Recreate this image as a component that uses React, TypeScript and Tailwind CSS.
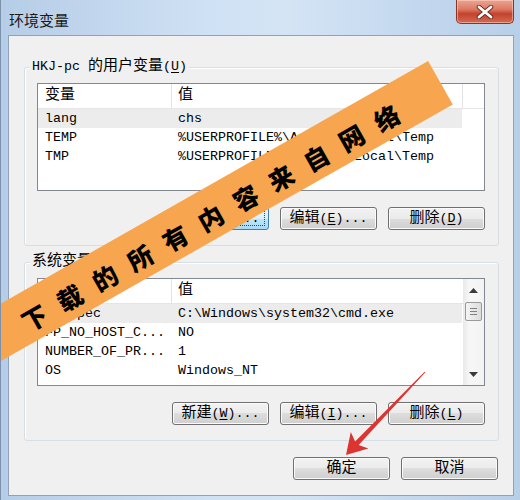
import type { ReactNode } from "react";

type Row = [string, string];

const userVars: Row[] = [
  ["lang", "chs"],
  ["TEMP", "%USERPROFILE%\\AppData\\Local\\Temp"],
  ["TMP", "%USERPROFILE%\\AppData\\Local\\Temp"],
];

const systemVars: Row[] = [
  ["ComSpec", "C:\\Windows\\system32\\cmd.exe"],
  ["FP_NO_HOST_C...", "NO"],
  ["NUMBER_OF_PR...", "1"],
  ["OS", "Windows_NT"],
];

// CJK runs are set a bit larger than the mono latin, like SimSun's full/half width
function Cn({ children }: { children: ReactNode }) {
  return <span className="text-[15px]">{children}</span>;
}

function Key({ children }: { children: ReactNode }) {
  return <span className="underline underline-offset-2">{children}</span>;
}

function Button({ children, focused = false }: { children: ReactNode; focused?: boolean }) {
  if (focused) {
    return (
      <div className="relative flex h-[23px] w-[97px] items-center justify-center rounded-[3px] border border-[#3c7fb1] bg-[linear-gradient(#eaf6fd_0%,#d9f0fc_50%,#bee6fd_50%,#a7d9f5_100%)] leading-[20px]">
        <span className="absolute inset-[3px] border border-dotted border-[#444]" />
        {children}
      </div>
    );
  }
  return (
    <div className="flex h-[23px] w-[97px] items-center justify-center rounded-[3px] border border-[#707070] bg-[linear-gradient(#f2f2f2_0%,#ebebeb_50%,#dddddd_50%,#cfcfcf_100%)] leading-[20px] shadow-[inset_0_0_0_1px_#fbfbfb]">
      {children}
    </div>
  );
}

function Header({ filler }: { filler: boolean }) {
  return (
    <div className="flex h-[25px] shrink-0 border-b border-[#e5e5e5] bg-white">
      <div className="flex w-[134px] shrink-0 items-center border-r border-[#e3e3e3] pl-[7px]">
        <Cn>变量</Cn>
      </div>
      {filler ? (
        <>
          <div className="flex w-[291px] shrink-0 items-center border-r border-[#e3e3e3] pl-[6px]">
            <Cn>值</Cn>
          </div>
          <div className="flex-1" />
        </>
      ) : (
        <div className="flex flex-1 items-center pl-[6px]">
          <Cn>值</Cn>
        </div>
      )}
    </div>
  );
}

function Rows({ rows }: { rows: Row[] }) {
  return (
    <>
      {rows.map(([name, value], i) => (
        <div
          key={name}
          className={
            i === 0
              ? "flex h-[19px] w-[424px] shrink-0 items-center bg-[#ececec]"
              : "flex h-[19px] w-[424px] shrink-0 items-center"
          }
        >
          <div className="w-[134px] shrink-0 whitespace-nowrap pl-[7px]">{name}</div>
          <div className="whitespace-nowrap pl-[6px]">{value}</div>
        </div>
      ))}
    </>
  );
}

function ScrollBar() {
  return (
    <div className="flex w-[21px] shrink-0 flex-col bg-[linear-gradient(90deg,#e8e8e8,#f7f7f7_30%,#f3f3f3)]">
      <div className="flex h-[22px] items-center justify-center">
        <svg width="9" height="5" viewBox="0 0 9 5">
          <path d="M0 5 L4.5 0 L9 5Z" fill="#3a3a3a" />
        </svg>
      </div>
      <div className="mx-[2px] mt-[1px] flex h-[19px] flex-col items-center justify-center gap-[2px] rounded-[2px] border border-[#9a9a9a] bg-[linear-gradient(90deg,#f4f4f4,#e8e8e8_50%,#dcdcdc)]">
        <span className="h-px w-[7px] bg-[#808080]" />
        <span className="h-px w-[7px] bg-[#808080]" />
        <span className="h-px w-[7px] bg-[#808080]" />
      </div>
      <div className="flex-1" />
      <div className="flex h-[22px] items-center justify-center">
        <svg width="9" height="5" viewBox="0 0 9 5">
          <path d="M0 0 L4.5 5 L9 0Z" fill="#3a3a3a" />
        </svg>
      </div>
    </div>
  );
}

function GroupBox({ label, children }: { label: ReactNode; children: ReactNode }) {
  return (
    <div className="relative ml-[15px] mr-[14px] rounded-[3px] border border-[#d5dfe5] pb-[15px] pl-[12px] pr-[13px] pt-[15px] shadow-[inset_1px_1px_0_#ffffff]">
      <span className="absolute -top-[11px] left-[5px] whitespace-nowrap bg-[#f0f0f0] px-[2px] leading-[20px]">
        {label}
      </span>
      {children}
    </div>
  );
}

export default function App() {
  return (
    <div className="relative h-[500px] w-[520px] overflow-hidden border-l border-[#7b90aa] bg-[linear-gradient(90deg,#b6cde7,#cfe1f4_40%,#d4e4f5_55%,#c3d8ee_80%,#b8cfe8)] text-[13.33px] text-black [font-family:'Liberation_Mono','Noto_Sans_CJK_SC',monospace]">
      {/* title bar */}
      <div className="flex h-[35px] items-start justify-between">
        <span className="pl-[8px] pt-[9px] text-[15px] leading-[22px] text-[#1b1b1b] [font-family:'Noto_Sans_CJK_SC',sans-serif]">
          环境变量
        </span>
        <div className="mr-[6px] flex h-[24px] w-[58px] items-center justify-center rounded-b-[5px] border border-t-0 border-[#8b3426] bg-[linear-gradient(#eba592,#dd7a63_40%,#c4432d_60%,#d46a54)] shadow-[inset_0_0_0_1px_rgba(255,220,210,0.5)]">
          <svg width="18" height="14" viewBox="0 0 18 14">
            <path d="M3 2 L15 12 M15 2 L3 12" stroke="#6b2a20" strokeWidth="4.6" strokeLinecap="round" />
            <path d="M3 2 L15 12 M15 2 L3 12" stroke="#ffffff" strokeWidth="2.8" strokeLinecap="round" />
          </svg>
        </div>
      </div>

      {/* client area */}
      <div className="ml-[7px] h-[461px] w-[506px] border border-[#8ea3ba] bg-[#f0f0f0]">
        <div className="mt-[31px]">
          <GroupBox
            label={
              <>
                HKJ-pc <Cn>的用户变量</Cn>(<Key>U</Key>)
              </>
            }
          >
            <div className="flex h-[108px] flex-col overflow-hidden border border-[#828790] bg-white">
              <Header filler />
              <Rows rows={userVars} />
            </div>
            <div className="mt-[16px] flex justify-end gap-[11px]">
              <Button focused>
                <Cn>新建</Cn>(<Key>N</Key>)...
              </Button>
              <Button>
                <Cn>编辑</Cn>(<Key>E</Key>)...
              </Button>
              <Button>
                <Cn>删除</Cn>(<Key>D</Key>)
              </Button>
            </div>
          </GroupBox>
        </div>

        <div className="mt-[16px]">
          <GroupBox
            label={
              <>
                <Cn>系统变量</Cn>(<Key>S</Key>)
              </>
            }
          >
            <div className="flex h-[108px] overflow-hidden border border-[#828790] bg-white">
              <div className="flex min-w-0 flex-1 flex-col">
                <Header filler={false} />
                <Rows rows={systemVars} />
              </div>
              <ScrollBar />
            </div>
            <div className="mt-[16px] flex justify-end gap-[11px]">
              <Button>
                <Cn>新建</Cn>(<Key>W</Key>)...
              </Button>
              <Button>
                <Cn>编辑</Cn>(<Key>I</Key>)...
              </Button>
              <Button>
                <Cn>删除</Cn>(<Key>L</Key>)
              </Button>
            </div>
          </GroupBox>
        </div>

        <div className="mt-[16px] flex justify-end gap-[11px] pr-[15px]">
          <Button>
            <Cn>确定</Cn>
          </Button>
          <Button>
            <Cn>取消</Cn>
          </Button>
        </div>
      </div>

      {/* watermark banner */}
      <div className="absolute left-[-84px] top-[196px] flex h-[50px] w-[560px] rotate-[-29.6deg] items-center justify-center bg-[#f7a64f]">
        <span className="translate-x-[21px] translate-y-[3px] whitespace-nowrap text-[25px] font-black leading-none tracking-[15.5px] text-black [font-family:'Noto_Sans_CJK_SC',sans-serif]">
          下载的所有内容来自网络
        </span>
      </div>

      {/* red annotation arrow */}
      <svg className="pointer-events-none absolute inset-0" width="520" height="500" viewBox="0 0 520 500">
        <polygon
          points="345,455 349.8,432.1 354.1,441.6 423.6,371.7 424.4,372.3 357.7,445 367.4,448.5"
          fill="#dc3431"
        />
      </svg>
    </div>
  );
}
